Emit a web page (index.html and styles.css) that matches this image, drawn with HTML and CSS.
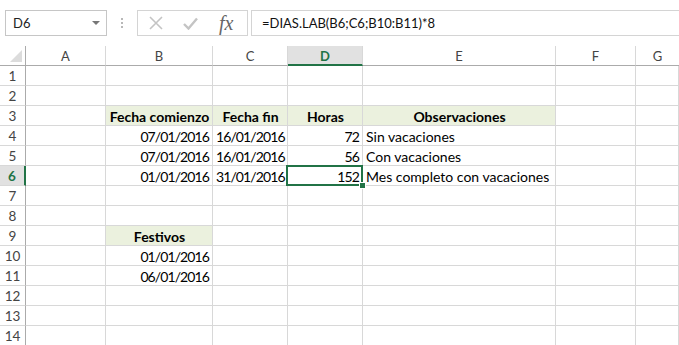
FILE: index.html
```html
<!DOCTYPE html>
<html lang="es">
<head>
<meta charset="utf-8">
<title>Hoja</title>
<link rel="stylesheet" href="styles.css">
</head>
<body>
<div class="toolbar">
  <div class="namebox"><span>D6</span><span class="caret"></span></div>
  <div class="sep"><span></span><span></span><span></span></div>
  <div class="fxbox">
    <svg class="ico" width="14" height="14" viewBox="0 0 14 14"><path d="M1 1 L13 13 M13 1 L1 13" stroke="#c4c4c4" stroke-width="1.6" fill="none"/></svg>
    <svg class="ico" width="15" height="13" viewBox="0 0 15 13"><path d="M1 7 L5.5 11.5 L14 1.5" stroke="#c4c4c4" stroke-width="2.4" fill="none"/></svg>
    <span class="fx">fx</span>
  </div>
  <div class="formula">=DIAS.LAB(B6;C6;B10:B11)*8</div>
</div>
<div class="sheet">
  <div class="h corner"><svg width="12" height="12" viewBox="0 0 12 12"><path d="M12 0 L12 12 L0 12 Z" fill="#dcdcdc"/></svg></div>
  <div class="h">A</div><div class="h">B</div><div class="h">C</div><div class="h sel">D</div><div class="h">E</div><div class="h">F</div><div class="h last">G</div>

  <div class="r">1</div><div class="c"></div><div class="c"></div><div class="c"></div><div class="c"></div><div class="c"></div><div class="c"></div><div class="c"></div>
  <div class="r">2</div><div class="c"></div><div class="c"></div><div class="c"></div><div class="c"></div><div class="c"></div><div class="c"></div><div class="c"></div>
  <div class="r">3</div><div class="c"></div><div class="c hd">Fecha comienzo</div><div class="c hd">Fecha fin</div><div class="c hd">Horas</div><div class="c hd">Observaciones</div><div class="c"></div><div class="c"></div>
  <div class="r">4</div><div class="c"></div><div class="c n">07/01/2016</div><div class="c n">16/01/2016</div><div class="c n">72</div><div class="c">Sin vacaciones</div><div class="c"></div><div class="c"></div>
  <div class="r">5</div><div class="c"></div><div class="c n">07/01/2016</div><div class="c n">16/01/2016</div><div class="c n">56</div><div class="c">Con vacaciones</div><div class="c"></div><div class="c"></div>
  <div class="r rsel">6</div><div class="c"></div><div class="c n">01/01/2016</div><div class="c n">31/01/2016</div><div class="c n active">152</div><div class="c">Mes completo con vacaciones</div><div class="c"></div><div class="c"></div>
  <div class="r">7</div><div class="c"></div><div class="c"></div><div class="c"></div><div class="c"></div><div class="c"></div><div class="c"></div><div class="c"></div>
  <div class="r">8</div><div class="c"></div><div class="c"></div><div class="c"></div><div class="c"></div><div class="c"></div><div class="c"></div><div class="c"></div>
  <div class="r">9</div><div class="c"></div><div class="c hd">Festivos</div><div class="c"></div><div class="c"></div><div class="c"></div><div class="c"></div><div class="c"></div>
  <div class="r">10</div><div class="c"></div><div class="c n">01/01/2016</div><div class="c"></div><div class="c"></div><div class="c"></div><div class="c"></div><div class="c"></div>
  <div class="r">11</div><div class="c"></div><div class="c n">06/01/2016</div><div class="c"></div><div class="c"></div><div class="c"></div><div class="c"></div><div class="c"></div>
  <div class="r">12</div><div class="c"></div><div class="c"></div><div class="c"></div><div class="c"></div><div class="c"></div><div class="c"></div><div class="c"></div>
  <div class="r">13</div><div class="c"></div><div class="c"></div><div class="c"></div><div class="c"></div><div class="c"></div><div class="c"></div><div class="c"></div>
  <div class="r">14</div><div class="c"></div><div class="c"></div><div class="c"></div><div class="c"></div><div class="c"></div><div class="c"></div><div class="c"></div>
</div>
</body>
</html>
```
FILE: styles.css
```css
html, body {
  margin: 0;
  padding: 0;
  background: #ffffff;
  overflow: hidden;
}
body {
  font-family: Lato, "Open Sans", sans-serif;
  font-size: 14px;
  color: #000;
  width: 679px;
  height: 345px;
}
.toolbar {
  display: flex;
  align-items: flex-start;
  height: 46px;
  box-sizing: border-box;
  padding: 10px 0 0 5px;
}
.namebox {
  width: 102px;
  height: 26px;
  box-sizing: border-box;
  border: 1px solid #c6c6c6;
  display: flex;
  align-items: center;
  justify-content: space-between;
  padding: 0 6px 0 7px;
  font-size: 13px;
  color: #222;
}
.caret {
  width: 0;
  height: 0;
  border-left: 4px solid transparent;
  border-right: 4px solid transparent;
  border-top: 4px solid #777;
}
.sep {
  width: 30px;
  height: 26px;
  display: flex;
  flex-direction: column;
  align-items: center;
  justify-content: center;
  gap: 2px;
}
.sep span {
  width: 2px;
  height: 2px;
  background: #b8b8b8;
}
.fxbox {
  width: 111px;
  height: 26px;
  box-sizing: border-box;
  border: 1px solid #d4d4d4;
  display: flex;
  align-items: center;
  padding-left: 11px;
}
.fxbox .ico:nth-child(2) {
  margin-left: 20px;
}
.fx {
  margin-left: 21px;
  font-family: "Liberation Serif", serif;
  font-style: italic;
  font-size: 20px;
  color: #666;
  line-height: 1;
}
.formula {
  flex: 1;
  margin-left: 3px;
  height: 26px;
  box-sizing: border-box;
  border: 1px solid #d4d4d4;
  border-right: none;
  padding-left: 10px;
  line-height: 24px;
  font-size: 13px;
  color: #111;
}
.sheet {
  display: grid;
  grid-template-columns: 26px 80px 107px 75px 75px 193px 80px 1fr;
  grid-auto-rows: 20px;
}
.sheet > div {
  box-sizing: border-box;
  border-right: 1px solid #d8d8d8;
  border-bottom: 1px solid #d8d8d8;
  line-height: 21px;
  white-space: nowrap;
  overflow: visible;
}
.h {
  text-align: center;
  color: #444;
  border-bottom-color: #ababab !important;
  font-size: 13px;
}
.h.corner {
  display: flex;
  align-items: flex-end;
  justify-content: flex-end;
  padding: 0 3px 3px 0;
  border-right-color: #ababab !important;
}
.h.sel {
  background: #e1e1e1;
  color: #217346;
  font-weight: bold;
  border-bottom: 2px solid #217346 !important;
}
.h.last {
  border-right: none !important;
}
.r {
  text-align: center;
  color: #444;
  border-right-color: #ababab !important;
  font-size: 13.5px;
}
.r.rsel {
  background: #e1e1e1;
  color: #217346;
  font-weight: bold;
  border-right: 2px solid #217346 !important;
}
.c {
  padding: 0 2px 0 3px;
}
.c.n {
  text-align: right;
  letter-spacing: -0.9px;
  padding-right: 3px;
}
.c.hd {
  background: #ebf1de;
  font-weight: bold;
  text-align: center;
}
.c.active {
  position: relative;
}
.c.active::after {
  content: "";
  position: absolute;
  left: -2px;
  top: -1px;
  right: -1px;
  bottom: -1px;
  border: 2px solid #217346;
  pointer-events: none;
}
.c.active::before {
  content: "";
  position: absolute;
  right: -4px;
  bottom: -4px;
  width: 5px;
  height: 5px;
  background: #217346;
  border: 1px solid #fff;
  z-index: 2;
}
```
